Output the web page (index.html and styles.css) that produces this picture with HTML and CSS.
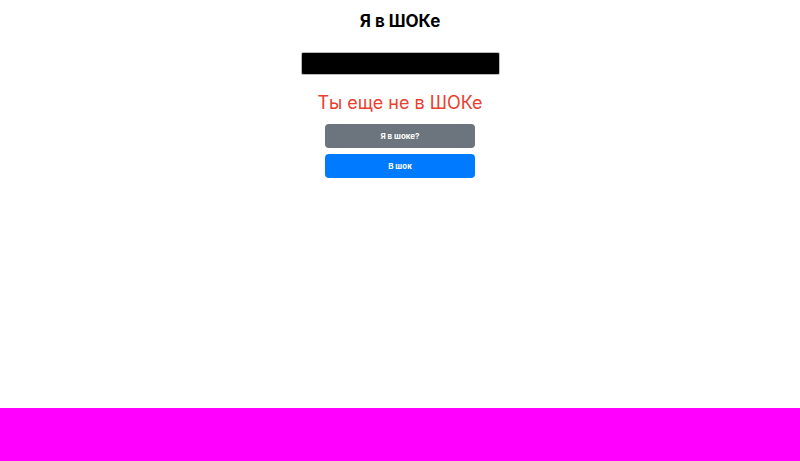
FILE: index.html
```html
<!DOCTYPE html>
<html lang="ru">
<head>
<meta charset="utf-8">
<link rel="stylesheet" href="styles.css">
</head>
<body>
<div class="page">
  <main class="content">
    <h1 class="title">Я в ШОКе</h1>
    <input class="field" type="text">
    <p class="status">Ты еще не в ШОКе</p>
    <button class="btn btn-gray">Я в шоке?</button>
    <button class="btn btn-blue">В шок</button>
  </main>
  <footer class="footer"></footer>
</div>
</body>
</html>
```
FILE: styles.css
```css
html, body {
  margin: 0;
  padding: 0;
  height: 100%;
}
body {
  font-family: Inter, "Noto Sans", sans-serif;
  background: #fff;
}
.page {
  display: flex;
  flex-direction: column;
  height: 461px;
}
.content {
  flex: 1;
  display: flex;
  flex-direction: column;
  align-items: center;
}
.title {
  margin: 10px 0 0;
  font-size: 17px;
  font-weight: 700;
  line-height: 22px;
  color: #000;
}
.field {
  margin-top: 20px;
  width: 199px;
  height: 23px;
  box-sizing: border-box;
  background: #000;
  border: 1px solid #bbb;
  border-radius: 2px;
  padding: 0;
}
.status {
  margin: 17px 0 0;
  font-size: 18px;
  line-height: 22px;
  color: #e8412f;
}
.btn {
  width: 150px;
  height: 24px;
  border: none;
  border-radius: 4px;
  color: #fff;
  font-family: Inter, "Noto Sans", sans-serif;
  font-size: 8px;
  font-weight: 700;
  padding: 0;
}
.btn-gray {
  margin-top: 10px;
  background: #6c757d;
}
.btn-blue {
  margin-top: 6px;
  background: #007bff;
}
.footer {
  height: 53px;
  background: #ff00ff;
}
```
